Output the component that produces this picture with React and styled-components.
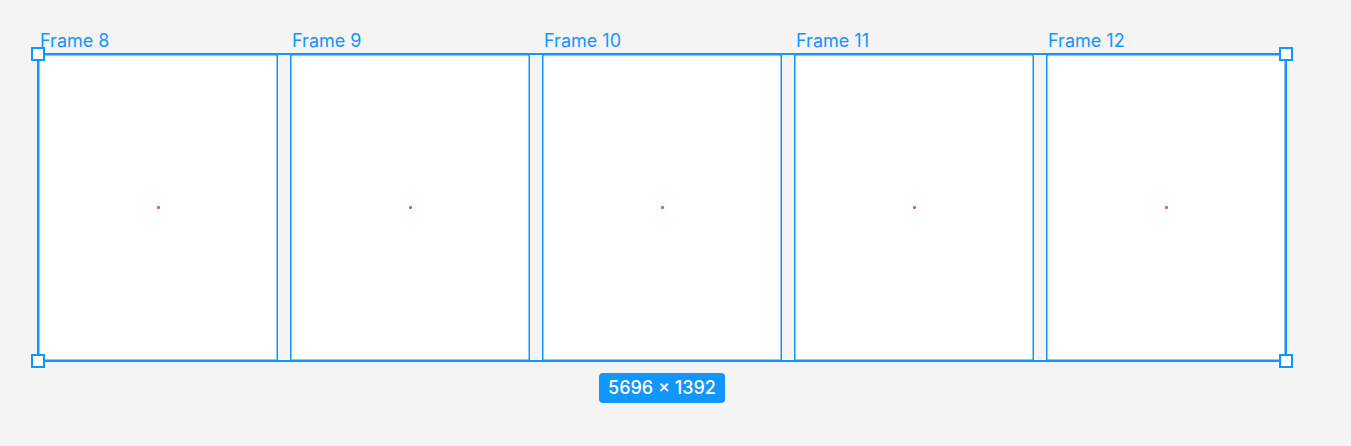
import React from "react";
import styled, { createGlobalStyle } from "styled-components";

const blue = "#1196fd";

const GlobalStyle = createGlobalStyle`
  html, body {
    margin: 0;
    background: #f4f4f4;
    font-family: Inter, "Noto Sans", sans-serif;
  }
`;

const Canvas = styled.div`
  width: 1351px;
  height: 446px;
  padding: 54px 0 0 38px;
  box-sizing: border-box;
`;

const Selection = styled.div`
  position: relative;
  display: inline-flex;
  flex-direction: column;
  align-items: center;
  gap: 12px;
`;

const Group = styled.div`
  position: relative;
  display: flex;
  gap: 12px;

  &::after {
    content: "";
    position: absolute;
    inset: -1px;
    border: 2px solid ${blue};
    pointer-events: none;
  }
`;

const Frame = styled.div`
  position: relative;
  width: 240px;
  height: 307px;
  background: #fff;
  box-shadow: inset 0 0 0 1.5px ${blue};
  display: flex;
  align-items: center;
  justify-content: center;
`;

const Label = styled.span`
  position: absolute;
  left: 2px;
  bottom: calc(100% + 3px);
  font-size: 18px;
  line-height: 20px;
  color: ${blue};
  white-space: nowrap;
`;

const Dot = styled.span`
  width: 3px;
  height: 3px;
  border-radius: 1px;
  background: #f53fb4;
`;

const Handle = styled.span`
  position: absolute;
  box-sizing: border-box;
  width: 14px;
  height: 14px;
  background: #fff;
  border: 2px solid ${blue};
  z-index: 2;
  ${(p) => (p.$top ? "top: -7px;" : "bottom: -7px;")}
  ${(p) => (p.$left ? "left: -7px;" : "right: -7px;")}
`;

const Badge = styled.div`
  background: ${blue};
  color: #fff;
  font-size: 18px;
  font-weight: 500;
  line-height: 30px;
  padding: 0 9px;
  border-radius: 4px;
  white-space: nowrap;
`;

const frames = ["Frame 8", "Frame 9", "Frame 10", "Frame 11", "Frame 12"];

export default function App() {
  return (
    <>
      <GlobalStyle />
      <Canvas>
        <Selection>
          <Group>
            {frames.map((name) => (
              <Frame key={name}>
                <Label>{name}</Label>
                <Dot />
              </Frame>
            ))}
            <Handle $top $left />
            <Handle $top />
            <Handle $left />
            <Handle />
          </Group>
          <Badge>5696 × 1392</Badge>
        </Selection>
      </Canvas>
    </>
  );
}
